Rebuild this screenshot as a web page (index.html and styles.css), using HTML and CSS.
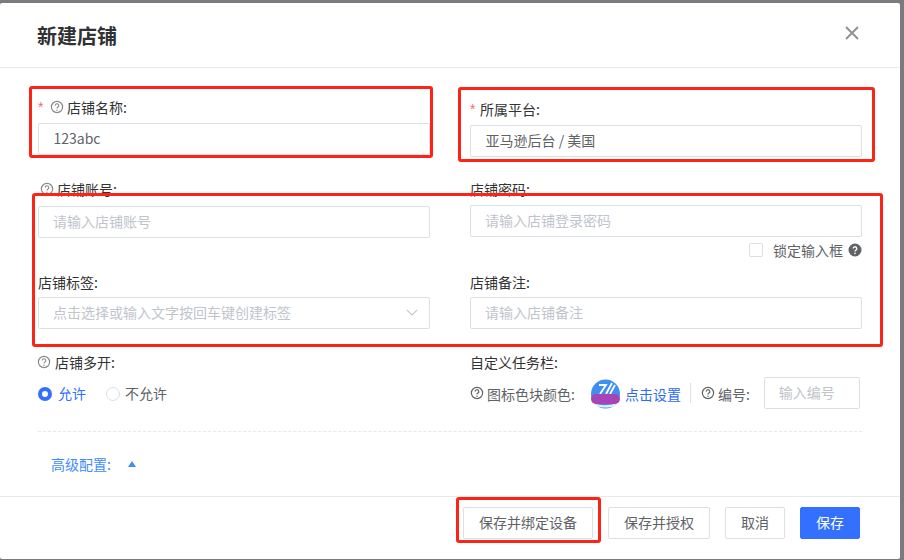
FILE: index.html
```html
<!DOCTYPE html>
<html lang="zh-CN">
<head>
<meta charset="utf-8">
<title>新建店铺</title>
<link rel="stylesheet" href="styles.css">
</head>
<body>
<div class="dialog">
  <header class="head">
    <h1 class="title">新建店铺</h1>
    <svg class="close" width="14" height="14" viewBox="0 0 14 14"><path d="M1 1 13 13M13 1 1 13" stroke="#8f9299" stroke-width="2" fill="none"/></svg>
  </header>
  <main class="body">
    <div class="row row-a">
      <div class="field">
        <div class="label"><span class="req">*</span><svg class="help" viewBox="0 0 14 14"><circle cx="7" cy="7" r="5.6" fill="none" stroke="#888" stroke-width="1.2"/><path d="M5.2 5.6a1.8 1.8 0 1 1 2.7 1.5c-.6.4-.9.7-.9 1.4" fill="none" stroke="#888" stroke-width="1.1"/><circle cx="7" cy="10.2" r=".7" fill="#888"/></svg><span>店铺名称:</span></div>
        <div class="input value">123abc</div>
      </div>
      <div class="field shift">
        <div class="label"><span class="req near">*</span><span>所属平台:</span></div>
        <div class="input value">亚马逊后台 / 美国</div>
      </div>
    </div>
    <div class="row row-b">
      <div class="field">
        <div class="label"><svg class="help" viewBox="0 0 14 14"><circle cx="7" cy="7" r="5.6" fill="none" stroke="#888" stroke-width="1.2"/><path d="M5.2 5.6a1.8 1.8 0 1 1 2.7 1.5c-.6.4-.9.7-.9 1.4" fill="none" stroke="#888" stroke-width="1.1"/><circle cx="7" cy="10.2" r=".7" fill="#888"/></svg><span>店铺账号:</span></div>
        <div class="input ph">请输入店铺账号</div>
      </div>
      <div class="field">
        <div class="label"><span>店铺密码:</span></div>
        <div class="input ph">请输入店铺登录密码</div>
        <div class="lock">
          <span class="check"></span>
          <span class="lock-text">锁定输入框</span>
          <svg class="help-solid" viewBox="0 0 14 14"><circle cx="7" cy="7" r="6.5" fill="#606266"/><path d="M5.2 5.6a1.8 1.8 0 1 1 2.7 1.5c-.6.4-.9.7-.9 1.4" fill="none" stroke="#fff" stroke-width="1.3"/><circle cx="7" cy="10.4" r=".8" fill="#fff"/></svg>
        </div>
      </div>
    </div>
    <div class="row row-c">
      <div class="field tight">
        <div class="label"><span>店铺标签:</span></div>
        <div class="input ph select"><span>点击选择或输入文字按回车键创建标签</span><svg width="12" height="7" viewBox="0 0 12 7"><path d="M.8.8 6 6l5.2-5.2" fill="none" stroke="#c0c4cc" stroke-width="1.1"/></svg></div>
      </div>
      <div class="field tight">
        <div class="label"><span>店铺备注:</span></div>
        <div class="input ph">请输入店铺备注</div>
      </div>
    </div>
    <div class="row row-d">
      <div class="field">
        <div class="label"><svg class="help" viewBox="0 0 14 14"><circle cx="7" cy="7" r="5.6" fill="none" stroke="#888" stroke-width="1.2"/><path d="M5.2 5.6a1.8 1.8 0 1 1 2.7 1.5c-.6.4-.9.7-.9 1.4" fill="none" stroke="#888" stroke-width="1.1"/><circle cx="7" cy="10.2" r=".7" fill="#888"/></svg><span>店铺多开:</span></div>
        <div class="radios">
          <span class="radio on"></span><span class="radio-text on-text">允许</span>
          <span class="radio off"></span><span class="radio-text">不允许</span>
        </div>
      </div>
      <div class="field">
        <div class="label"><span>自定义任务栏:</span></div>
        <div class="taskbar">
          <svg class="help dark" viewBox="0 0 14 14"><circle cx="7" cy="7" r="5.6" fill="none" stroke="#606266" stroke-width="1.2"/><path d="M5.2 5.6a1.8 1.8 0 1 1 2.7 1.5c-.6.4-.9.7-.9 1.4" fill="none" stroke="#606266" stroke-width="1.2"/><circle cx="7" cy="10.2" r=".7" fill="#606266"/></svg>
          <span class="tb-text">图标色块颜色:</span>
          <svg class="logo" width="29" height="32" viewBox="0 0 29 32"><circle cx="14.5" cy="16" r="14.5" fill="#3d8ff0"/><path d="M8 7h7l-6 9M21 5l-6 11M24 7l-5 9" fill="none" stroke="#fff" stroke-width="1.8"/><path d="M3 25c6 3 15 3 23 0l-3 3c-5 2-12 2-17 0z" fill="#e8f2fd"/><rect y="16" width="29" height="10" rx="5" fill="#a844b8"/></svg>
          <span class="link">点击设置</span>
          <span class="divider"></span>
          <svg class="help dark" viewBox="0 0 14 14"><circle cx="7" cy="7" r="5.6" fill="none" stroke="#606266" stroke-width="1.2"/><path d="M5.2 5.6a1.8 1.8 0 1 1 2.7 1.5c-.6.4-.9.7-.9 1.4" fill="none" stroke="#606266" stroke-width="1.2"/><circle cx="7" cy="10.2" r=".7" fill="#606266"/></svg>
          <span class="tb-text">编号:</span>
          <div class="input ph num">输入编号</div>
        </div>
      </div>
    </div>
    <div class="dash"></div>
    <div class="adv"><span>高级配置:</span><span class="tri"></span></div>
  </main>
  <footer class="foot">
    <button class="btn">保存并绑定设备</button>
    <button class="btn">保存并授权</button>
    <button class="btn">取消</button>
    <button class="btn primary">保存</button>
  </footer>
</div>
<div class="mark mark-1"></div>
<div class="mark mark-2"></div>
<div class="mark mark-3"></div>
<div class="mark mark-4"></div>
</body>
</html>
```
FILE: styles.css
```css
* { box-sizing: border-box; }
html, body { margin: 0; height: 100%; }
body {
  background: #7b7b7f;
  font-family: "Noto Sans CJK SC", "Liberation Sans", sans-serif;
  font-size: 14px;
  color: #333;
  overflow: hidden;
  padding: 3px 4px 1px 0;
}
.dialog {
  background: #fff;
  height: 556px;
  border-radius: 2px;
  display: flex;
  flex-direction: column;
}
.head {
  height: 65px;
  flex: none;
  padding: 2px 41px 0 37px;
  border-bottom: 1px solid #e8eaee;
  display: flex;
  align-items: center;
  justify-content: space-between;
}
.title { margin: 0; font-size: 20px; font-weight: 700; color: #303133; line-height: 28px; }
.close { margin-top: -7px; }
.body { flex: 1; padding: 30px 38px 0; }
.row { display: grid; grid-template-columns: 392px 392px; column-gap: 40px; align-items: start; }
.row-a { height: 82px; }
.row-b { height: 93px; }
.row-c { height: 80px; }
.row-d { height: 78px; }
.shift { padding-top: 2px; }
.label { height: 20px; padding-bottom: 2px; display: flex; align-items: center; color: #333; margin-bottom: 5px; }
.tight .label { margin-bottom: 4px; }
.req { color: #f56c6c; width: 13px; font-family: "Liberation Sans", sans-serif; }
.req.near { width: 10px; }
.help { width: 14px; height: 14px; margin: 0 3px 0 -1px; flex: none; }
.row-d .label .help { margin-right: 4px; }
.row-b .field:first-child .label { padding-left: 3px; margin-bottom: 6px; }
.input {
  height: 32px;
  border: 1px solid #dcdfe6;
  border-radius: 2px;
  padding: 0 14px;
  line-height: 28px;
  background: #fff;
}
.value { color: #606266; padding-left: 14.5px; }
.ph { color: #c0c4cc; }
.select { display: flex; align-items: center; justify-content: space-between; padding: 0 11px 2px 14px; }
.lock { display: flex; align-items: center; justify-content: flex-end; height: 14px; margin-top: 6px; color: #606266; }
.check { width: 14px; height: 14px; border: 1px solid #dcdfe6; border-radius: 2px; margin-right: 10px; }
.lock-text { margin-right: 5px; }
.help-solid { width: 14px; height: 14px; }
.radios { display: flex; align-items: center; height: 20px; margin-top: 11px; color: #606266; }
.radio { width: 14px; height: 14px; border-radius: 50%; flex: none; }
.radio-text { margin-bottom: 2px; }
.radio.on { background: #fff; border: 4px solid #3370ff; margin-right: 6px; }
.radio.off { border: 1px solid #dcdfe6; margin-left: 20px; margin-right: 5px; }
.on-text { color: #3370ff; }
.taskbar { display: flex; align-items: center; height: 32px; margin-top: -1px; color: #606266; }
.taskbar .help { margin-left: 0; }
.tb-text { white-space: nowrap; margin-top: 2px; }
.logo { margin-left: 16px; flex: none; margin-top: 2px; }
.link { color: #2b6cf0; margin: 2px 0 0 5px; white-space: nowrap; }
.divider { width: 1px; height: 20px; background: #dcdfe6; margin: 0 10px 0 9px; flex: none; }
.num { width: 96px; margin-left: 14px; flex: none; }
.dash { border-top: 1px dashed #e4e7ed; }
.adv { margin: 22px 0 0 13px; height: 20px; line-height: 20px; color: #3f8cff; display: flex; align-items: center; }
.tri { width: 0; height: 0; border-left: 4.5px solid transparent; border-right: 4.5px solid transparent; border-bottom: 6px solid #3f8cff; margin-left: 17px; }
.foot {
  flex: none;
  height: 63px;
  border-top: 1px solid #e8eaee;
  padding: 10px 40px 0 0;
  display: flex;
  justify-content: flex-end;
  align-items: flex-start;
  gap: 15px;
}
.btn {
  height: 32px;
  min-width: 60px;
  padding: 0 15px 2px;
  border: 1px solid #dcdfe6;
  border-radius: 2px;
  background: #fff;
  color: #606266;
  font: inherit;
  line-height: 28px;
}
.primary { background: #3370ff; border-color: #3370ff; color: #fff; }
.mark { position: absolute; border: 3px solid #fb2416; border-radius: 3px; pointer-events: none; }
.mark-1 { left: 29px; top: 86px; width: 404px; height: 72px; }
.mark-2 { left: 458px; top: 87px; width: 417px; height: 75px; }
.mark-3 { left: 32px; top: 193px; width: 851px; height: 154px; }
.mark-4 { left: 456px; top: 497px; width: 145px; height: 46px; }
```
